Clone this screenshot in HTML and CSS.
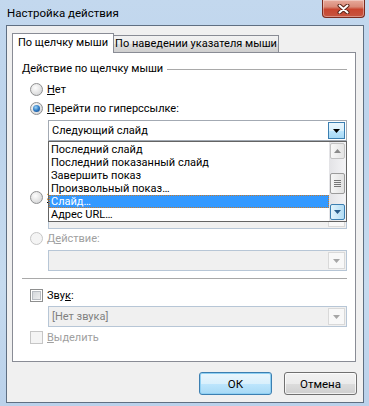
FILE: index.html
```html
<!DOCTYPE html>
<html lang="ru">
<head>
    <meta charset="UTF-8">
    <title>Настройка действия</title>
    <link rel="stylesheet" href="styles.css">
</head>
<body>
    <div class="window">
        <div class="titlebar">
            <span class="title">Настройка действия</span>
            <div class="close-btn">
                <svg width="13" height="10" viewBox="0 0 13 10">
                    <path d="M2.5 1.5 L10.5 8.5 M10.5 1.5 L2.5 8.5" stroke="#5a2418" stroke-width="4" stroke-linecap="round"/>
                    <path d="M2.5 1.5 L10.5 8.5 M10.5 1.5 L2.5 8.5" stroke="#fff" stroke-width="2" stroke-linecap="round"/>
                </svg>
            </div>
        </div>

        <div class="client">
            <!-- Tabs -->
            <div class="tabs">
                <div class="tab active">По щелчку мыши</div>
                <div class="tab">По наведении указателя мыши</div>
            </div>

            <div class="panel">
                <div class="group-title">
                    <span>Действие по щелчку мыши</span>
                    <div class="group-line"></div>
                </div>

                <label class="option"><span class="radio"></span><span><u>Н</u>ет</span></label>
                <label class="option"><span class="radio checked"></span><span><u>П</u>ерейти по гиперссылке:</span></label>

                <div class="combo open-wrap">
                    <span class="combo-text">Следующий слайд</span>
                    <span class="combo-btn hot">
                        <svg width="7" height="4" viewBox="0 0 7 4"><path d="M0 0h7l-3.5 4z" fill="#000"/></svg>
                    </span>

                    <!-- Open dropdown list -->
                    <div class="dropdown">
                        <div class="dropdown-items">
                            <div class="item">Последний слайд</div>
                            <div class="item">Последний показанный слайд</div>
                            <div class="item">Завершить показ</div>
                            <div class="item">Произвольный показ…</div>
                            <div class="item selected">Слайд…</div>
                            <div class="item">Адрес URL…</div>
                        </div>
                        <div class="scrollbar">
                            <div class="sb-btn">
                                <svg width="7" height="4" viewBox="0 0 7 4"><path d="M0 4h7l-3.5-4z" fill="#8a8a8a"/></svg>
                            </div>
                            <div class="sb-thumb">
                                <span></span><span></span><span></span><span></span>
                            </div>
                            <div class="sb-btn hot">
                                <svg width="7" height="4" viewBox="0 0 7 4"><path d="M0 0h7l-3.5 4z" fill="#2a5d8a"/></svg>
                            </div>
                        </div>
                    </div>
                </div>

                <label class="option macro"><span class="radio"></span><span class="hidden-label"><u>З</u>апуск</span></label>
                <div class="combo disabled">
                    <span class="combo-text"></span>
                    <span class="combo-btn"><svg width="7" height="4" viewBox="0 0 7 4"><path d="M0 0h7l-3.5 4z" fill="#a6a6a6"/></svg></span>
                </div>

                <label class="option disabled"><span class="radio"></span><span>Д<u>е</u>йствие:</span></label>
                <div class="combo disabled">
                    <span class="combo-text"></span>
                    <span class="combo-btn"><svg width="7" height="4" viewBox="0 0 7 4"><path d="M0 0h7l-3.5 4z" fill="#a6a6a6"/></svg></span>
                </div>

                <div class="separator"></div>

                <label class="option check-row"><span class="checkbox"></span><span>Зву<u>к</u>:</span></label>
                <div class="combo disabled">
                    <span class="combo-text">[Нет звука]</span>
                    <span class="combo-btn"><svg width="7" height="4" viewBox="0 0 7 4"><path d="M0 0h7l-3.5 4z" fill="#a6a6a6"/></svg></span>
                </div>

                <label class="option check-row disabled"><span class="checkbox"></span><span><u>В</u>ыделить</span></label>
            </div>

            <div class="buttons">
                <button class="btn default">ОК</button>
                <button class="btn">Отмена</button>
            </div>
        </div>
    </div>
</body>
</html>
```

FILE: styles.css
```css
* {
    box-sizing: border-box;
}

body {
    margin: 0;
    font-family: Roboto, "Noto Sans", sans-serif;
    font-size: 11px;
    color: #000;
    background: #c4d9ee;
}

.window {
    width: 369px;
    height: 406px;
    display: flex;
    flex-direction: column;
    padding: 0 5px 3px 6px;
    background: linear-gradient(#c3d8ee, #bdd4ec 30%, #c6dbef 70%, #bad1ea);
}

.titlebar {
    height: 25px;
    display: flex;
    justify-content: space-between;
    align-items: flex-start;
}

.title {
    margin: 5px 0 0 1px;
    font-size: 11.5px;
    line-height: 16px;
}

.close-btn {
    width: 43px;
    height: 18px;
    margin-right: -1px;
    display: flex;
    align-items: center;
    justify-content: center;
    border: 1px solid #7a2a1e;
    border-top: none;
    border-radius: 0 0 4px 4px;
    background: linear-gradient(#e8aa9c, #d98a78 40%, #c9452f 55%, #c65540);
    box-shadow: inset 0 0 0 1px rgba(255,255,255,0.35);
}

.client {
    flex: 1;
    border: 1px solid #5f6f82;
    background: #f0f0f0;
    padding: 7px 7px 0 5px;
    display: flex;
    flex-direction: column;
}

/* Tabs */
.tabs {
    height: 19px;
    display: flex;
    align-items: flex-end;
}

.tab {
    height: 17px;
    width: 166px;
    margin-left: -1px;
    border: 1px solid #898c95;
    border-bottom: none;
    background: linear-gradient(#f2f2f2, #ebebeb 50%, #dddddd 50%, #cfcfcf);
    text-align: center;
    line-height: 16px;
    white-space: nowrap;
}

.tab.active {
    position: relative;
    z-index: 1;
    height: 20px;
    width: 102px;
    margin-left: 0;
    margin-bottom: -1px;
    background: #fff;
    line-height: 17px;
}

.panel {
    height: 310px;
    border: 1px solid #898c95;
    background: #fff;
    padding: 8px 8px 0 9px;
}

.group-title {
    display: flex;
    align-items: center;
    height: 16px;
    line-height: 16px;
    margin-bottom: 3px;
    white-space: nowrap;
}

.group-line {
    flex: 1;
    height: 1px;
    margin-left: 4px;
    background: #a9a9a9;
}

.option {
    height: 19px;
    display: flex;
    align-items: center;
    gap: 4px;
    padding-left: 8px;
    white-space: nowrap;
}

.option.disabled {
    color: #a0a0a0;
}

.option.macro {
    margin-top: 47px;
}

.radio {
    width: 13px;
    height: 13px;
    flex: none;
    border-radius: 50%;
    border: 1px solid #8f9091;
    background: radial-gradient(circle at 40% 35%, #fdfdfd, #e8e8e8 45%, #c9cbce);
    position: relative;
}

.radio.checked::after {
    content: '';
    position: absolute;
    left: 2px;
    top: 2px;
    width: 7px;
    height: 7px;
    border-radius: 50%;
    background: radial-gradient(circle at 40% 35%, #9fd5f7, #2f7bc3 50%, #0e3e80);
}

.option.disabled .radio,
.option.disabled .checkbox {
    border-color: #c6c6c6;
    background: #f4f4f4;
}

.checkbox {
    width: 13px;
    height: 13px;
    flex: none;
    border: 1px solid #8e8f8f;
    background: #fff;
    box-shadow: inset 0 0 0 1px #fff, inset 0 0 0 2px #b8bcc2;
    background-image: linear-gradient(135deg, #cdd1d6, #f4f4f4);
}

.option.disabled .checkbox {
    box-shadow: none;
    background-image: none;
}

/* Combo boxes */
.combo {
    height: 21px;
    width: 299px;
    margin-left: 26px;
    display: flex;
    align-items: center;
    justify-content: space-between;
    border: 1px solid #a3aab3;
    background: #fff;
    padding: 0 1px 0 3px;
}

.combo.open-wrap {
    position: relative;
    margin-top: 2px;
}

.combo.disabled {
    margin-top: 1px;
    border-color: #b7c6d6;
    background: #f0f0f0;
    color: #808080;
}

.combo-btn {
    width: 17px;
    height: 17px;
    display: flex;
    align-items: center;
    justify-content: center;
    border: 1px solid #d9d9d9;
    background: #f8f8f8;
}

.combo-btn.hot {
    border-color: #3c7fb1;
    background: linear-gradient(#eaf6fd, #d9f0fc 50%, #bee6fd 50%, #a7d9f5);
}

.dropdown {
    position: absolute;
    z-index: 2;
    top: 20px;
    left: -1px;
    width: 299px;
    height: 81px;
    border: 1px solid #646464;
    background: #fff;
    display: flex;
}

.dropdown-items {
    flex: 1;
    padding-top: 1px;
}

.item {
    height: 13px;
    line-height: 13px;
    padding-left: 2px;
    white-space: nowrap;
}

.item.selected {
    background: #3399ff;
    color: #fff;
    outline: 1px dotted #c87a2a;
    outline-offset: -1px;
}

.scrollbar {
    width: 17px;
    padding: 1px;
    background: linear-gradient(90deg, #e3e3e6, #f4f4f6);
    display: flex;
    flex-direction: column;
}

.sb-btn {
    height: 16px;
    display: flex;
    align-items: center;
    justify-content: center;
    border: 1px solid #c2c2c2;
    border-radius: 2px;
    background: linear-gradient(90deg, #f8f8f8, #e4e4e4);
}

.sb-btn.hot {
    border-color: #3c7fb1;
    background: linear-gradient(90deg, #e3f4fc, #b2dcf4);
}

.sb-thumb {
    height: 21px;
    margin: 14px 0 10px;
    border: 1px solid #9b9b9b;
    border-radius: 2px;
    background: linear-gradient(90deg, #f6f6f6, #e2e2e2);
    display: flex;
    flex-direction: column;
    align-items: center;
    justify-content: center;
    gap: 1px;
}

.sb-thumb span {
    width: 7px;
    height: 1px;
    background: #777;
}

.option.check-row {
    margin-top: 7px;
}

.option.check-row.disabled {
    margin-top: 1px;
}

.option.macro + .combo.disabled {
    margin-top: 1px;
}

.option.disabled + .combo.disabled {
    margin-top: 2px;
}

.separator {
    height: 1px;
    margin-top: 7px;
    background: #a9a9a9;
}

/* Dialog buttons */
.buttons {
    display: flex;
    justify-content: flex-end;
    gap: 12px;
    margin: 10px -1px 0 0;
}

.btn {
    width: 73px;
    height: 23px;
    padding: 0;
    font-family: inherit;
    font-size: 11.5px;
    color: #000;
    border: 1px solid #707070;
    border-radius: 3px;
    background: linear-gradient(#f2f2f2, #ebebeb 50%, #dddddd 50%, #cfcfcf);
    box-shadow: inset 0 0 0 1px rgba(255,255,255,0.7);
}

.btn.default {
    border-color: #3c7fb1;
    background: linear-gradient(#eaf6fd, #d9f0fc 50%, #bee6fd 50%, #a7d9f5);
    box-shadow: inset 0 0 0 1px #8fd0f3;
}
```
